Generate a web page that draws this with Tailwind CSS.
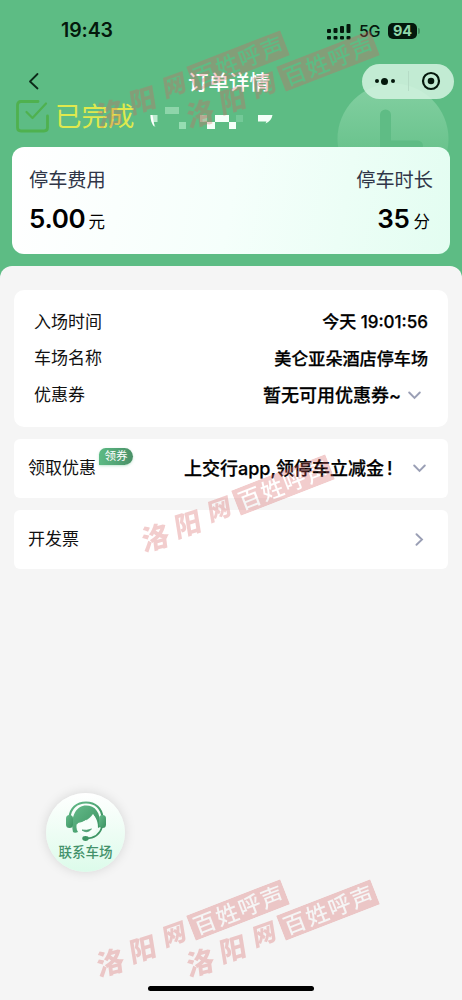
<!DOCTYPE html>
<html lang="zh-CN">
<head>
<meta charset="utf-8">
<title>订单详情</title>
<script src="https://cdn.jsdelivr.net/npm/@tailwindcss/browser@4"></script>
</head>
<body class="bg-[#f5f5f5]">
<div class="relative w-[462px] h-[1000px] overflow-hidden bg-[#5dbc84] flex flex-col text-[#111] font-['Inter','Noto_Sans_CJK_SC',sans-serif] whitespace-nowrap">

  <!-- clock decoration -->
  <svg class="absolute left-[337px] top-[83px]" width="112" height="112" viewBox="0 0 112 112">
    <defs><linearGradient id="clk" x1="0" y1="0" x2="0" y2="1"><stop offset="0" stop-color="#84d0a2"/><stop offset=".6" stop-color="#6ac38d"/></linearGradient></defs>
    <circle cx="56" cy="56" r="55.5" fill="url(#clk)"/>
    <path d="M48.500 32v31h32" fill="none" stroke="#5fbc85" stroke-width="11" stroke-linecap="round"/>
  </svg>

  <!-- status bar -->
  <div class="relative h-[62px] flex items-center justify-between pl-[61px] pr-[42px]">
    <span class="text-[19.500px] font-semibold leading-none text-[#04180c] tracking-[-0.1px]">19:43</span>
    <div class="flex items-center">
      <svg width="24" height="17" viewBox="0 0 24 17" fill="#04180c">
        <rect x="0" y="6" width="4" height="4" rx="1"/><rect x="6.500" y="5" width="4" height="5" rx="1"/><rect x="13" y="3" width="4" height="7" rx="1"/><rect x="19.500" y="1" width="4" height="9" rx="1"/>
        <rect x="0" y="13" width="4" height="3.500" rx="1"/><rect x="6.500" y="13" width="4" height="3.500" rx="1"/><rect x="13" y="13" width="4" height="3.500" rx="1"/><rect x="19.500" y="13" width="4" height="3.500" rx="1"/>
      </svg>
      <span class="ml-[8px] w-[21px] text-[16px] font-medium leading-none text-[#04180c] tracking-[-0.5px]">5G</span>
      <span class="ml-[8px] w-[29px] h-[16px] rounded-[5px] bg-[#04180c] text-[#8fd6aa] text-[14.500px] font-bold leading-[16px] text-center">94</span>
      <span class="ml-px w-[2px] h-[6px] rounded-r-full bg-[#3f8a5d]"></span>
    </div>
  </div>

  <!-- navigation bar -->
  <div class="relative h-[38px] flex items-center pl-[28px] pr-[8px]">
    <svg width="12" height="18" viewBox="0 0 12 18" fill="none" stroke="#0c2a19" stroke-width="1.800" stroke-linecap="round" stroke-linejoin="round"><path d="M9.500 2 2 9.500l7.500 7"/></svg>
    <h1 class="ml-[148px] mt-[5px] w-[84px] text-[20.500px] font-medium text-white leading-none">订单详情</h1>
    <div class="ml-auto w-[92px] h-[35px] rounded-full bg-[#d4f3e1]/85 flex items-center">
      <div class="flex-1 flex items-center justify-center gap-[2.500px]">
        <i class="size-[4px] rounded-full bg-[#04180c]"></i><i class="size-[7px] rounded-full bg-[#04180c]"></i><i class="size-[4px] rounded-full bg-[#04180c]"></i>
      </div>
      <i class="w-px h-[20px] bg-[#b6dcc6]"></i>
      <div class="flex-1 flex items-center justify-center">
        <svg width="20" height="20" viewBox="0 0 20 20"><circle cx="10" cy="10" r="8" fill="none" stroke="#04180c" stroke-width="2.200"/><circle cx="10" cy="10" r="3.300" fill="#04180c"/></svg>
      </div>
    </div>
  </div>

  <!-- order state -->
  <div class="relative h-[47px] flex items-start pl-[16px]">
    <svg class="shrink-0" width="33" height="33" viewBox="0 0 33 33" fill="none" stroke="#4fb14f" stroke-width="2.800" stroke-linecap="round" stroke-linejoin="round">
      <path d="M22 1.500H5Q1.500 1.500 1.500 5v22.500Q1.500 31 5 31h23q3.500 0 3.500-3.500V16"/><path d="m10.500 12 6 6L30 3.500" stroke-width="2.200"/>
    </svg>
    <span class="ml-[6px] w-[80px] text-[26.500px] leading-[33px] text-[#dfe94e]">已完成</span>
    <svg class="ml-[15px]" width="124" height="32" viewBox="150 100 124 32">
      <path d="M150.500 115h7v7h-4l2 5q-5-5-5-12Z" fill="#bdecd0"/><path d="M150.500 115q0 8 4 12l-2-12z" fill="#fff"/>
      <path d="M165 107h14v7h-14z" fill="#8ed5aa"/><path d="M179 122h7v7h-7z" fill="#96ddb2"/>
      <path d="M200 115h7v7h-7z" fill="#a8caa9"/><path d="M207 122h8v7h-8zM215 115h14v7h-14zM229 122h7v7h-7z" fill="#f4fff8"/>
      <path d="M236 115h7v7h-7z" fill="#74c998"/><path d="M258 115h14.500q-1 6-7 8.500l1-2H258z" fill="#f4fff8"/>
    </svg>
  </div>

  <!-- fee summary -->
  <section class="relative mx-[12px] h-[107px] shrink-0 rounded-[12px] bg-linear-[100deg] from-white via-[#f5fffb] to-[#e3fdf1] px-[17px] pt-[21px] flex justify-between">
    <div>
      <div class="text-[19.200px] leading-[24px] text-[#303648]">停车费用</div>
      <div class="mt-[12px] flex items-baseline leading-[30px] text-black"><b class="text-[26px] font-semibold tracking-[-0.300px]">5.00</b><span class="ml-[3px] text-[16.500px]">元</span></div>
    </div>
    <div>
      <div class="text-[19.200px] leading-[24px] text-[#303648]">停车时长</div>
      <div class="mt-[12px] mr-[3px] flex items-baseline justify-end leading-[30px] text-black"><b class="text-[26px] font-semibold tracking-[-0.300px]">35</b><span class="ml-[4px] text-[16.500px]">分</span></div>
    </div>
  </section>

  <!-- details -->
  <main class="relative mt-[12px] flex-1 rounded-t-[12px] bg-[#f5f5f5] px-[14px] pt-[24px] flex flex-col gap-[12px] text-[17px]">
    <section class="h-[137px] rounded-[10px] bg-white px-[20px] pt-[14px]">
      <div class="h-[36.500px] flex items-center justify-between"><span>入场时间</span><span class="font-medium text-[17px] text-black [-webkit-text-stroke:0.25px_black]">今天 19:01:56</span></div>
      <div class="h-[36.500px] flex items-center justify-between"><span>车场名称</span><span class="font-medium text-[17.100px] text-black [-webkit-text-stroke:0.25px_black]">美仑亚朵酒店停车场</span></div>
      <div class="h-[36.500px] flex items-center"><span>优惠券</span><span class="ml-auto w-[137px] font-medium text-[18px] text-black [-webkit-text-stroke:0.25px_black]">暂无可用优惠券~</span>
        <svg class="ml-[8px] mr-[7px]" width="13" height="9" viewBox="0 0 13 9" fill="none" stroke="#9a9fb5" stroke-width="1.900" stroke-linecap="round"><path d="m1.200 1.500 5.300 5.500 5.300-5.500"/></svg></div>
    </section>
    <section class="h-[59px] rounded-[6px] bg-white pl-[14px] pr-[22px] flex items-center">
      <span>领取优惠</span>
      <span class="self-start mt-[9px] ml-[3px] w-[34px] h-[17px] rounded-tl-[7px] rounded-tr-[9px] rounded-br-[9px] bg-linear-to-r from-[#5cba84] to-[#4a9067] text-white text-[11.500px] leading-[17px] text-center shadow-sm shadow-[#5cba84]/30">领券</span>
      <span class="ml-auto w-[214px] font-medium text-[18px] text-black [-webkit-text-stroke:0.25px_black] flex">上交行app,领停车立减金<span class="ml-[3px]">!</span></span>
      <svg class="ml-[15px]" width="13" height="9" viewBox="0 0 13 9" fill="none" stroke="#9a9fb5" stroke-width="1.900" stroke-linecap="round"><path d="m1.200 1.500 5.300 5.500 5.300-5.500"/></svg>
    </section>
    <section class="h-[59px] rounded-[6px] bg-white pl-[14px] pr-[24px] flex items-center justify-between">
      <span>开发票</span>
      <svg width="9" height="13" viewBox="0 0 9 13" fill="none" stroke="#9a9fb5" stroke-width="1.900" stroke-linecap="round"><path d="m1.500 1.200 5.500 5.300-5.500 5.300"/></svg>
    </section>
  </main>

  <!-- floating contact button -->
  <div class="absolute left-[46px] top-[793px] size-[79px] rounded-full bg-linear-to-b from-white to-[#dcfbea] shadow-[0_0_12px_rgba(0,0,0,0.13)] flex flex-col items-center">
    <svg class="mt-[8px] shrink-0" width="42" height="41" viewBox="0 0 42 41">
      <defs><linearGradient id="hs" x1="0" y1="0" x2="1" y2="1"><stop offset="0" stop-color="#64bb8a"/><stop offset="1" stop-color="#3b9160"/></linearGradient></defs>
      <path d="M4.500 17C5 7 12 1.500 21 1.500S37 7 37.500 17" fill="none" stroke="url(#hs)" stroke-width="2.200"/>
      <path d="M8 31C5 14 12 4.500 21 4.500S36 11 35 26l-2 1c0-5-1-8-3-11l-2-3c-4 6-10 8-15 9-2 3-2 6 0 9-2 1-4 1-5 0Z" fill="url(#hs)"/>
      <path d="M11.500 23.500q6-1.500 10-5l-1.500 3.500q6-3 8-8.500 4 4.500 4 10c0 7-5 11.500-10.500 11.500s-10-5-10-11.500Z" fill="#f8fffb"/>
      <rect x="1" y="14" width="7" height="13" rx="3.500" fill="url(#hs)"/><rect x="34" y="14" width="7" height="13" rx="3.500" fill="url(#hs)"/>
      <path d="M17 29q5 4 9.500-1-5 2-9.500 1Z" fill="#4a9d70" stroke="#4a9d70" stroke-width=".8"/>
      <path d="M37 26q-3 11-16 11.500" fill="none" stroke="#3f9565" stroke-width="1.600"/><ellipse cx="20.500" cy="37.500" rx="3.200" ry="2.400" fill="#3f9565"/>
    </svg>
    <span class="mt-[2px] text-[13.500px] leading-[16px] font-medium text-[#43916a]">联系车场</span>
  </div>

  <!-- watermark stamps -->
  <svg class="absolute inset-0 pointer-events-none" width="462" height="1000" viewBox="0 0 462 1000">
    <defs>
      <mask id="cut" maskUnits="userSpaceOnUse" x="-52" y="-16" width="104" height="32">
        <rect x="-50.500" y="-13.500" width="101" height="27" fill="#fff"/>
        <text y="8.500" font-family="'Liberation Serif','Noto Sans CJK SC',serif" font-size="22.500" font-weight="500" fill="#000"><tspan x="-47">百</tspan><tspan x="-23">姓</tspan><tspan x="1">呼</tspan><tspan x="25">声</tspan></text>
      </mask>
      <g id="wm" fill="#d75f5f" opacity=".31">
        <rect x="-50.500" y="-13.500" width="101" height="27" mask="url(#cut)"/>
        <g font-family="'Noto Sans CJK SC',sans-serif" font-weight="900" text-anchor="middle">
          <text transform="translate(-138 3) rotate(6) skewX(-8)" y="10" font-size="28">洛</text>
          <text transform="translate(-103 2) rotate(4) skewX(-8)" y="10" font-size="27">阳</text>
          <text transform="translate(-68 -1) rotate(2) skewX(-10)" y="9" font-size="24">网</text>
        </g>
      </g>
    </defs>
    <use href="#wm" transform="translate(238 61) rotate(-21.200)"/>
    <use href="#wm" transform="translate(328 61) rotate(-21.200)"/>
    <use href="#wm" transform="translate(283 485) rotate(-21.200)"/>
    <use href="#wm" transform="translate(238 910) rotate(-21.200)"/>
    <use href="#wm" transform="translate(328 910) rotate(-21.200)"/>
  </svg>

  <!-- home indicator -->
  <div class="absolute left-[148px] top-[986px] w-[166px] h-[5px] rounded-full bg-black"></div>
</div>
</body>
</html>
